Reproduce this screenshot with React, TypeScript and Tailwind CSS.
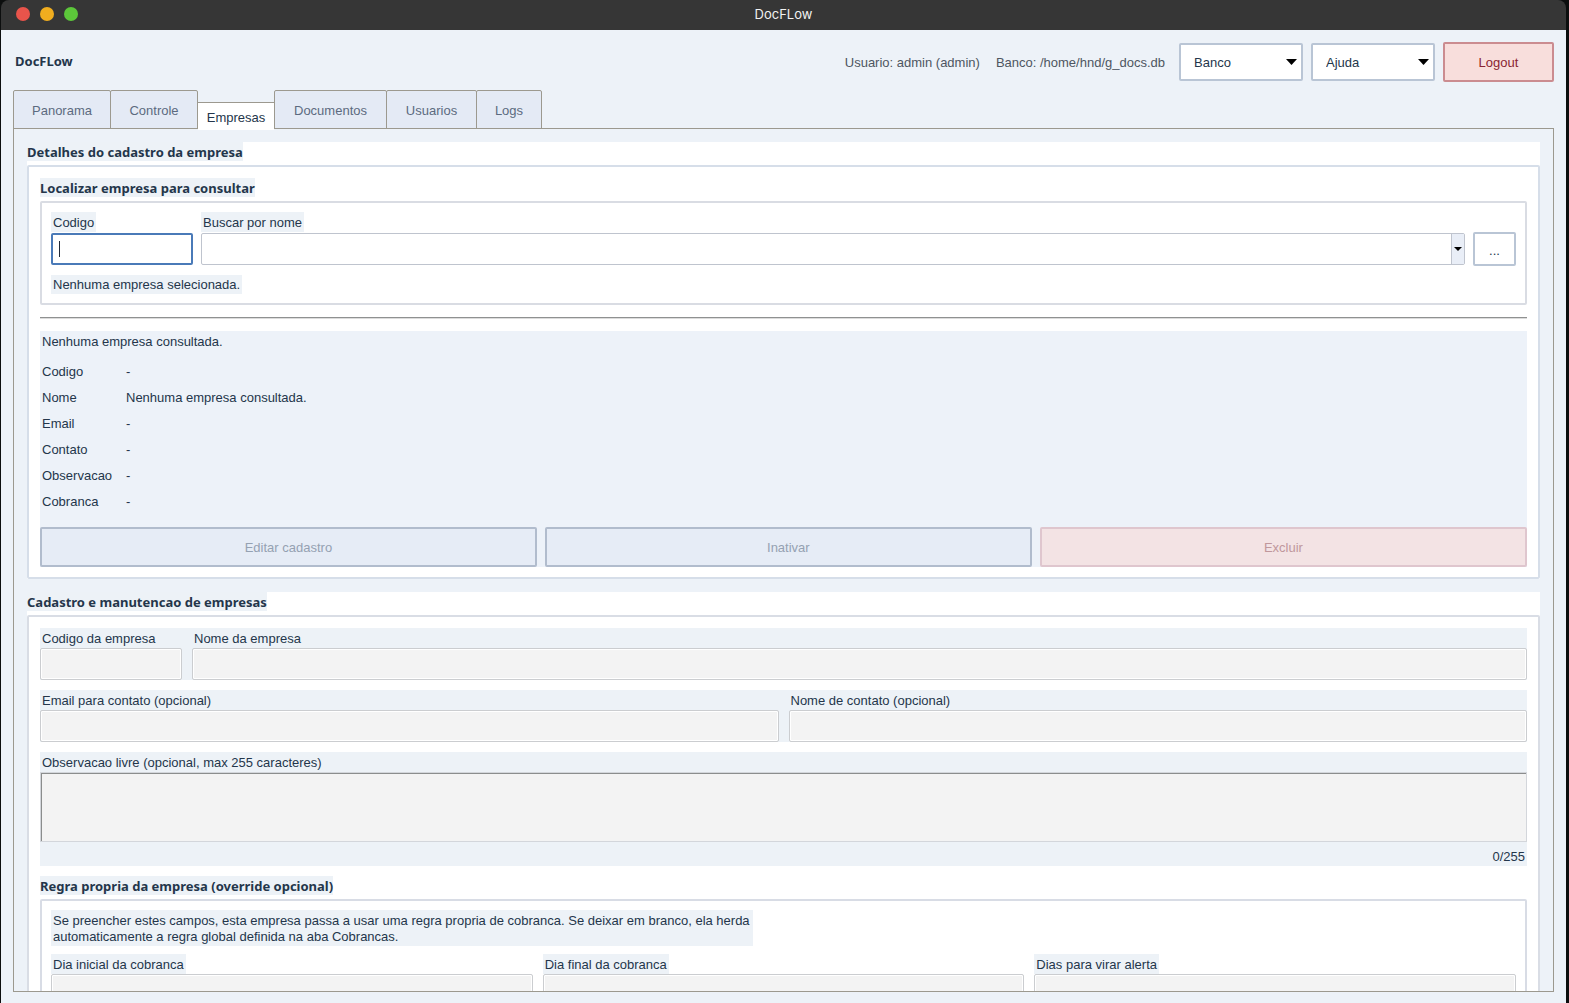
import React, { useState } from 'react'
import clsx from 'clsx'

const tabs = [
  { name: 'Panorama', width: 'w-[98px]' },
  { name: 'Controle', width: 'w-[88px]' },
  { name: 'Empresas', width: 'w-[76px]' },
  { name: 'Documentos', width: 'w-[113px]' },
  { name: 'Usuarios', width: 'w-[91px]' },
  { name: 'Logs', width: 'w-[66px]' },
]

const details = [
  { label: 'Codigo', value: '-' },
  { label: 'Nome', value: 'Nenhuma empresa consultada.' },
  { label: 'Email', value: '-' },
  { label: 'Contato', value: '-' },
  { label: 'Observacao', value: '-' },
  { label: 'Cobranca', value: '-' },
]

const ruleFields = [
  { id: 'dia-inicial', label: 'Dia inicial da cobranca' },
  { id: 'dia-final', label: 'Dia final da cobranca' },
  { id: 'dias-alerta', label: 'Dias para virar alerta' },
]

const TitleBar = () => (
  <div className="flex h-[30px] shrink-0 items-center rounded-t-lg bg-[#363636] px-[15px] text-[#f2f2f2]">
    <div className="flex flex-1 gap-[10px] pb-[2px]">
      <span className="size-[14px] rounded-full bg-[#e8544b]" />
      <span className="size-[14px] rounded-full bg-[#f0ad1f]" />
      <span className="size-[14px] rounded-full bg-[#5cc73a]" />
    </div>
    <span className="pb-[2px] font-['Inter'] leading-4">DocFLow</span>
    <div className="flex-1" />
  </div>
)

const MenuSelect = ({ label }: { label: string }) => (
  <div className="relative">
    <select
      aria-label={label}
      className="h-[38px] w-[124px] appearance-none rounded-[2px] border-2 border-[#b9c5d5] bg-white pt-[2px] pl-[13px] text-[#24364b]"
    >
      <option>{label}</option>
    </select>
    <svg className="pointer-events-none absolute top-4 right-[6px]" width="11" height="6" viewBox="0 0 11 6">
      <path d="M0 0h11L5.5 6z" fill="#000" />
    </svg>
  </div>
)

const Header = () => (
  <header className="flex h-[60px] shrink-0 items-center justify-between pt-3 pb-2">
    <h1 className="pl-[2px] font-['Noto_Sans'] text-[13px] font-bold">DocFLow</h1>
    <div className="flex items-center gap-2 text-[#4e5661]">
      <span className="pt-[2px] pr-2">Usuario: admin (admin)</span>
      <span className="pt-[2px] pr-[6px]">Banco: /home/hnd/g_docs.db</span>
      <MenuSelect label="Banco" />
      <MenuSelect label="Ajuda" />
      <button className="h-10 w-[111px] rounded-[2px] border-2 border-[#cb8c90] bg-[#f8dedc] pt-[2px] text-[#8a2432]">
        Logout
      </button>
    </div>
  </header>
)

type FrameProps = { title: string; className?: string; children: React.ReactNode }

// label frame: the title sits on its own tinted strip above the border
const Frame = ({ title, className, children }: FrameProps) => (
  <section className="bg-white">
    <h2 className="mb-1 h-[19px] w-fit bg-[#edf2f7] font-['Noto_Sans'] text-[13px] leading-5 font-bold">{title}</h2>
    <div className={clsx('rounded-[2px] border-2', className)}>{children}</div>
  </section>
)

type FieldProps = { id: string; label: string; className?: string; tight?: boolean }

const Field = ({ id, label, className, tight }: FieldProps) => (
  <div className={className}>
    <label htmlFor={id} className={clsx('block h-5 px-[2px] leading-[22px]', tight && 'w-fit bg-[#edf2f7]')}>
      {label}
    </label>
    <input
      id={id}
      disabled
      className="block h-8 w-full rounded-[2px] border border-[#cbcdd0] bg-[#f3f3f3] px-2 inset-ring inset-ring-white"
    />
  </div>
)

const SearchFrame = () => (
  <Frame title="Localizar empresa para consultar" className="border-[#d9dce3] p-[9px]">
    <div className="flex items-end">
      <div className="mr-2 w-[142px]">
        <label htmlFor="codigo" className="mb-px block h-5 w-fit bg-[#edf2f7] px-[2px] leading-[22px]">
          Codigo
        </label>
        <div className="relative">
          <input
            id="codigo"
            className="block h-8 w-full rounded-[2px] border-2 border-[#4a7ab8] bg-white px-[6px] caret-transparent outline-none"
          />
          <span className="pointer-events-none absolute top-2 left-2 h-4 w-px bg-[#1f2937]" />
        </div>
      </div>
      <div className="mr-2 flex-1">
        <label htmlFor="nome-busca" className="mb-px block h-5 w-fit bg-[#edf2f7] px-[2px] leading-[22px]">
          Buscar por nome
        </label>
        <div className="relative">
          <select
            id="nome-busca"
            className="block h-8 w-full appearance-none rounded-[2px] border border-[#bfc4ce] bg-white px-2"
          />
          <span className="pointer-events-none absolute inset-y-px right-px flex w-[13px] items-center justify-center border-l border-[#bfc4ce] bg-[#e9eef7]">
            <svg width="8" height="4" viewBox="0 0 8 4">
              <path d="M0 0h8L4 4z" fill="#000" />
            </svg>
          </span>
        </div>
      </div>
      <button
        aria-label="Abrir busca"
        className="-mb-px h-[34px] w-[43px] rounded-[2px] border-2 border-[#b9c5d5] bg-white pt-1"
      >
        ...
      </button>
    </div>
    <p className="mt-[10px] w-fit bg-[#edf2f7] px-[2px] leading-[19px]">Nenhuma empresa selecionada.</p>
  </Frame>
)

const DetailsSection = () => (
  <Frame title="Detalhes do cadastro da empresa" className="border-[#d6dee9] px-[11px] pt-[11px] pb-[10px]">
    <SearchFrame />
    <hr className="my-3 h-[2px] border-t border-b border-t-[#8f9191] border-b-[#dcdcdc]" />
    <div className="bg-[#edf2f9]">
      <p className="mb-2 h-5 px-[2px] leading-[22px]">Nenhuma empresa consultada.</p>
      <dl className="mb-3 grid grid-cols-[84px_1fr] px-[2px] leading-[26px]">
        {details.map(({ label, value }) => (
          <React.Fragment key={label}>
            <dt>{label}</dt>
            <dd>{value}</dd>
          </React.Fragment>
        ))}
      </dl>
      <div className="grid grid-cols-[1.02fr_1fr_1fr] gap-2">
        <button disabled className="h-10 rounded-[2px] border-2 border-[#b1bccd] bg-[#e6ecf6] pt-[2px] text-[#95a1b2]">
          Editar cadastro
        </button>
        <button disabled className="h-10 rounded-[2px] border-2 border-[#b1bccd] bg-[#e6ecf6] pt-[2px] text-[#95a1b2]">
          Inativar
        </button>
        <button disabled className="h-10 rounded-[2px] border-2 border-[#dfc6ce] bg-[#f3e3e4] pt-[2px] text-[#c0979c]">
          Excluir
        </button>
      </div>
    </div>
  </Frame>
)

const FormSection = () => (
  <Frame title="Cadastro e manutencao de empresas" className="flex flex-col gap-[10px] border-[#d9dde5] p-[11px]">
    <div className="flex gap-[10px] bg-[#edf2f7]">
      <Field id="codigo-empresa" label="Codigo da empresa" className="w-[142px]" />
      <Field id="nome-empresa" label="Nome da empresa" className="flex-1" />
    </div>
    <div className="grid grid-cols-2 gap-[10px] bg-[#edf2f7]">
      <Field id="email" label="Email para contato (opcional)" />
      <Field id="contato" label="Nome de contato (opcional)" />
    </div>
    <div className="bg-[#edf2f7]">
      <label htmlFor="observacao" className="block h-5 px-[2px] leading-[22px]">
        Observacao livre (opcional, max 255 caracteres)
      </label>
      <textarea
        id="observacao"
        disabled
        className="block h-[70px] w-full resize-none border border-[#d3d6db] bg-[#f3f3f3] inset-shadow-[1px_1px_0_#8b8d8d]"
      />
      <p className="px-[2px] pt-[6px] text-right leading-[18px]">0/255</p>
    </div>
    <Frame title="Regra propria da empresa (override opcional)" className="border-[#d8dce5] p-[9px]">
      <p className="mb-2 w-fit max-w-[702px] bg-[#edf2f7] px-[2px] pt-[3px] pb-px leading-4">
        Se preencher estes campos, esta empresa passa a usar uma regra propria de cobranca. Se deixar em branco, ela
        herda automaticamente a regra global definida na aba Cobrancas.
      </p>
      <div className="grid grid-cols-3 gap-[10px]">
        {ruleFields.map((field) => (
          <Field key={field.id} id={field.id} label={field.label} tight />
        ))}
      </div>
    </Frame>
  </Frame>
)

export default function App() {
  const [active, setActive] = useState('Empresas')

  return (
    <div className="h-screen bg-[#0c0e0e] pr-[3px] pl-px font-['Liberation_Sans',sans-serif] text-[13px] text-[#24364b]">
      <div className="flex h-full flex-col">
        <TitleBar />
        <div className="flex min-h-0 flex-1 flex-col bg-[#edf2f8] px-3 pb-[11px]">
          <Header />
          <nav role="tablist" className="flex h-[39px] shrink-0 items-end">
            {tabs.map(({ name, width }, i) => (
              <button
                key={name}
                role="tab"
                aria-selected={name === active}
                onClick={() => setActive(name)}
                className={clsx(
                  'border-[#9c998f] pt-[2px]',
                  width,
                  name === active
                    ? 'relative z-10 -mb-px h-7 border-t bg-white'
                    : 'h-[39px] rounded-t-[2px] border bg-[#e4eaf5] text-[#5c6a80]',
                  name !== active && i > 0 && tabs[i - 1].name !== active && '-ml-px',
                )}
              >
                {name}
              </button>
            ))}
          </nav>
          <main className="-mt-px flex min-h-0 flex-1 flex-col gap-[13px] overflow-hidden border border-[#9c998f] p-[13px]">
            <DetailsSection />
            <FormSection />
          </main>
        </div>
      </div>
    </div>
  )
}
